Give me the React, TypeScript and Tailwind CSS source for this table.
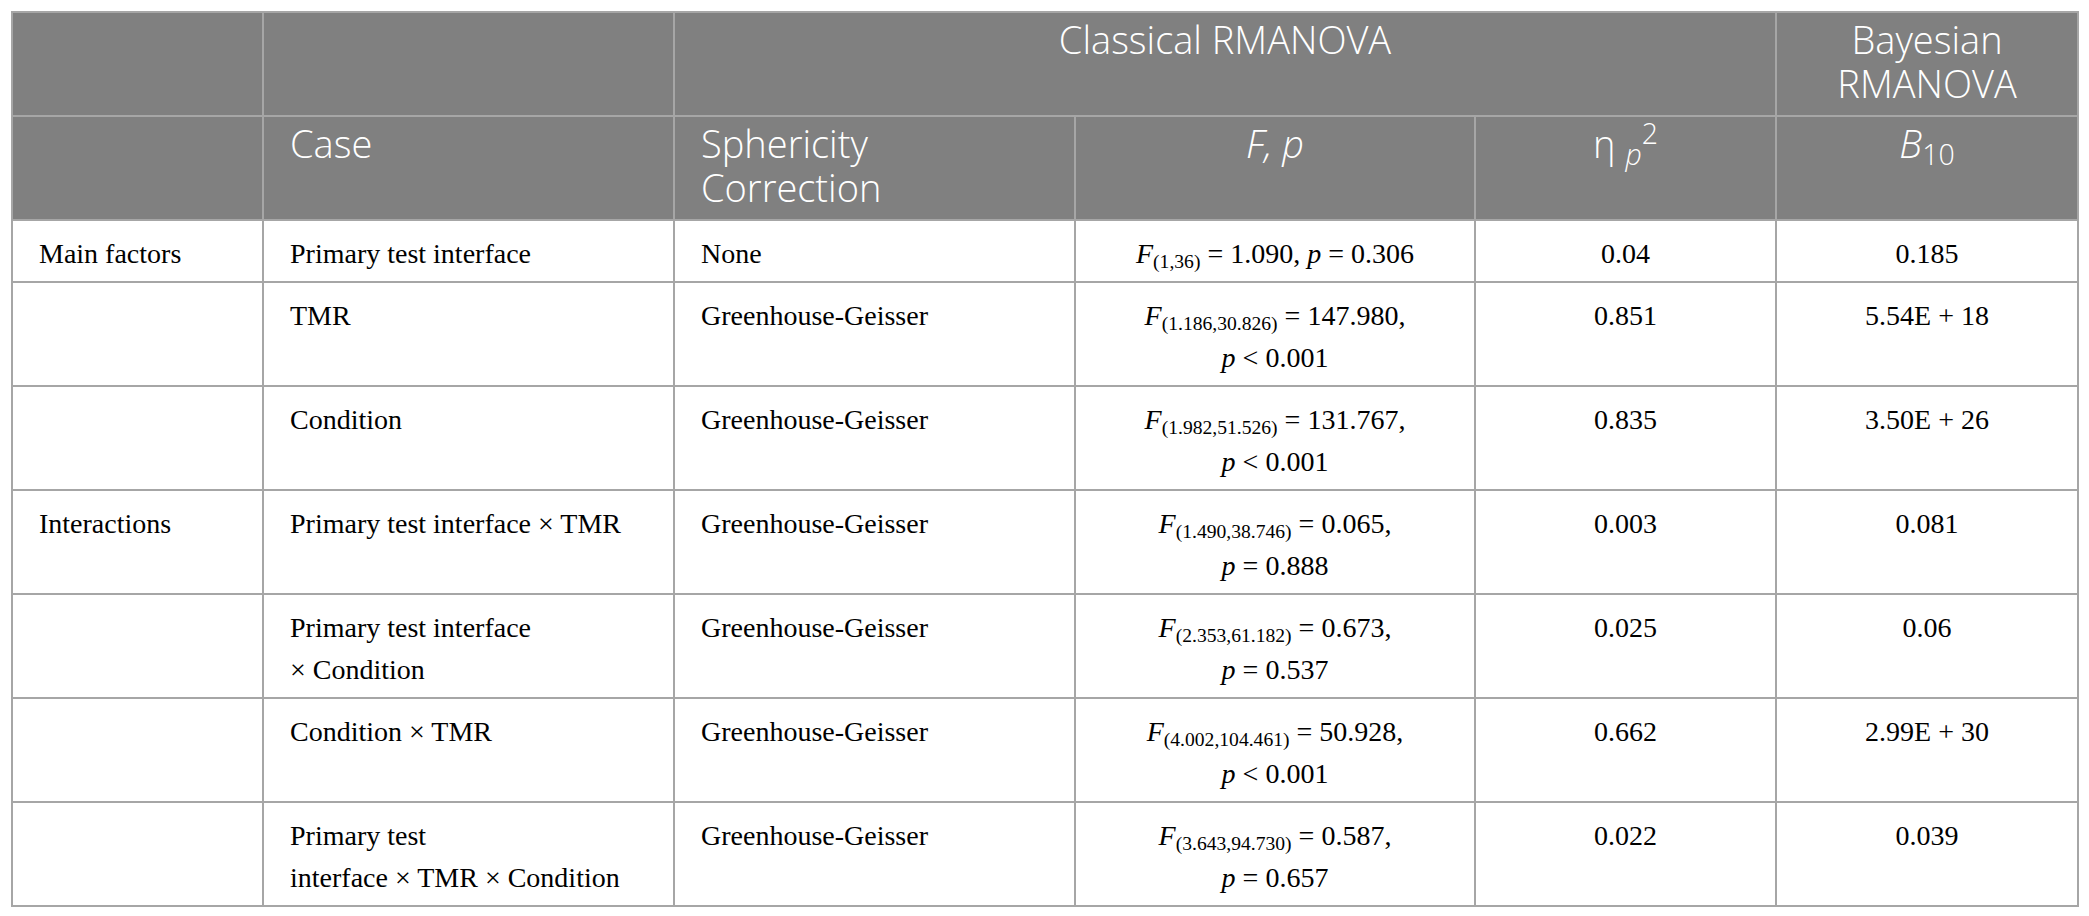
import React from 'react';

type Row = {
  group: string;
  caseLines: string[];
  correction: string;
  df: string;
  f: string;
  p: string;
  sign: string;
  oneLine?: boolean;
  eta: string;
  bf: string;
};

const rows: Row[] = [
  { group: 'Main factors', caseLines: ['Primary test interface'], correction: 'None', df: '(1,36)', f: '1.090', sign: '=', p: '0.306', oneLine: true, eta: '0.04', bf: '0.185' },
  { group: '', caseLines: ['TMR'], correction: 'Greenhouse-Geisser', df: '(1.186,30.826)', f: '147.980', sign: '<', p: '0.001', eta: '0.851', bf: '5.54E + 18' },
  { group: '', caseLines: ['Condition'], correction: 'Greenhouse-Geisser', df: '(1.982,51.526)', f: '131.767', sign: '<', p: '0.001', eta: '0.835', bf: '3.50E + 26' },
  { group: 'Interactions', caseLines: ['Primary test interface × TMR'], correction: 'Greenhouse-Geisser', df: '(1.490,38.746)', f: '0.065', sign: '=', p: '0.888', eta: '0.003', bf: '0.081' },
  { group: '', caseLines: ['Primary test interface', '× Condition'], correction: 'Greenhouse-Geisser', df: '(2.353,61.182)', f: '0.673', sign: '=', p: '0.537', eta: '0.025', bf: '0.06' },
  { group: '', caseLines: ['Condition × TMR'], correction: 'Greenhouse-Geisser', df: '(4.002,104.461)', f: '50.928', sign: '<', p: '0.001', eta: '0.662', bf: '2.99E + 30' },
  { group: '', caseLines: ['Primary test', 'interface × TMR × Condition'], correction: 'Greenhouse-Geisser', df: '(3.643,94.730)', f: '0.587', sign: '=', p: '0.657', eta: '0.022', bf: '0.039' },
];

const th = 'border-2 border-[#a6a6a6] align-top pt-[4px] pb-[9px] px-[26px] font-light leading-[44px]';
const td = 'border-2 border-[#a6a6a6] align-top pt-[12px] pb-[6px] px-[26px] leading-[42px]';

const FStat = ({ r }: { r: Row }) => (
  <>
    <i>F</i>
    <sub className="not-italic text-[70%]">{r.df}</sub> = {r.f},{r.oneLine ? ' ' : <br />}
    <i>p</i> {r.sign} {r.p}
  </>
);

export default function App() {
  return (
    <div className="bg-white min-h-screen pt-[11px] pl-[11px]">
      <table className="table-fixed border-collapse w-[2066px] text-black">
        <colgroup>
          <col className="w-[251px]" />
          <col className="w-[411px]" />
          <col className="w-[401px]" />
          <col className="w-[400px]" />
          <col className="w-[301px]" />
          <col className="w-[302px]" />
        </colgroup>
        <thead className="bg-[#808080] text-white text-[38px] font-['Open_Sans',sans-serif]">
          <tr className="h-[104px]">
            <th className={th}></th>
            <th className={th}></th>
            <th colSpan={3} className={`${th} text-center`}>
              Classical RMANOVA
            </th>
            <th className={`${th} text-center`}>
              Bayesian
              <br />
              RMANOVA
            </th>
          </tr>
          <tr className="h-[104px]">
            <th className={th}></th>
            <th className={`${th} text-left`}>Case</th>
            <th className={`${th} text-left`}>
              Sphericity
              <br />
              Correction
            </th>
            <th className={`${th} text-center italic`}>F, p</th>
            <th className={`${th} text-center`}>
              η <sub className="italic">p</sub>
              <sup>2</sup>
            </th>
            <th className={`${th} text-center`}>
              <i>B</i>
              <sub>10</sub>
            </th>
          </tr>
        </thead>
        <tbody className="text-[28px] font-['Liberation_Serif',serif]">
          {rows.map((r, i) => (
            <tr key={i}>
              <td className={td}>{r.group}</td>
              <td className={`${td} whitespace-nowrap`}>
                {r.caseLines.map((l, j) => (
                  <React.Fragment key={j}>
                    {j > 0 && <br />}
                    {l}
                  </React.Fragment>
                ))}
              </td>
              <td className={td}>{r.correction}</td>
              <td className={`${td} text-center whitespace-nowrap`}>
                <FStat r={r} />
              </td>
              <td className={`${td} text-center`}>{r.eta}</td>
              <td className={`${td} text-center`}>{r.bf}</td>
            </tr>
          ))}
        </tbody>
      </table>
    </div>
  );
}
